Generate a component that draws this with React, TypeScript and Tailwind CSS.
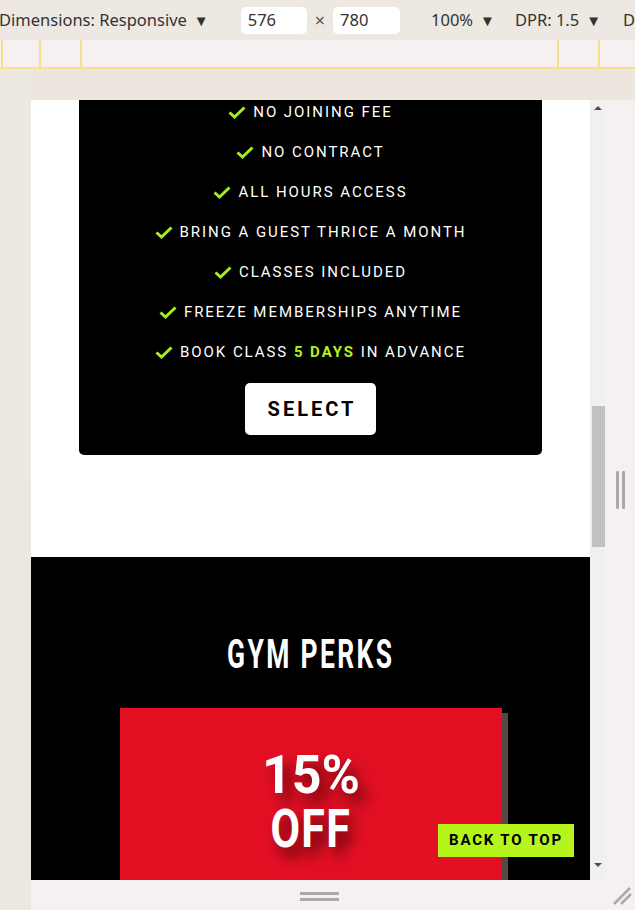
import React from "react";

const perks: React.ReactNode[] = [
  "NO JOINING FEE",
  "NO CONTRACT",
  "ALL HOURS ACCESS",
  "BRING A GUEST THRICE A MONTH",
  "CLASSES INCLUDED",
  "FREEZE MEMBERSHIPS ANYTIME",
  <>
    BOOK CLASS <span className="font-bold text-[#b3f21a]">5 DAYS</span> IN ADVANCE
  </>,
];

const Check = () => (
  <svg width="18" height="13" viewBox="0 0 18 13" fill="none" className="shrink-0">
    <path d="M1.5 6.5 L6.5 11 L16.5 1.5" stroke="#a6ee19" strokeWidth="3" />
  </svg>
);

const Caret = () => <span className="ml-[7px] text-[15px]">▼</span>;

const Toolbar = () => (
  <div className="h-[40px] bg-[#ede8e1] flex items-center whitespace-nowrap overflow-hidden text-[16.5px] text-[#333] font-['Noto_Sans',sans-serif]">
    <span className="shrink-0 -ml-[1px] flex items-center">
      Dimensions: Responsive
      <Caret />
    </span>
    <span className="shrink-0 ml-[32px] w-[66px] h-[27px] bg-white rounded-[5px] pl-[7px] flex items-center">576</span>
    <span className="shrink-0 mx-[8px] text-[18px] text-[#555]">×</span>
    <span className="shrink-0 w-[67px] h-[27px] bg-white rounded-[5px] pl-[7px] flex items-center">780</span>
    <span className="shrink-0 ml-[31px] flex items-center">
      100%
      <Caret />
    </span>
    <span className="shrink-0 ml-[20px] flex items-center">
      DPR: 1.5
      <Caret />
    </span>
    <span className="shrink-0 ml-[22px]">D</span>
  </div>
);

const Ruler = () => (
  <div className="h-[29px] bg-[#f6f1f0] border-b-2 border-[#fbe08a] flex">
    <div className="w-[2px] ml-[1px] bg-[#fbe08a]" />
    <div className="w-[2px] ml-[36px] bg-[#fbe08a]" />
    <div className="w-[2px] ml-[39px] bg-[#fbe08a]" />
    <div className="w-[2px] ml-[475px] bg-[#fbe08a]" />
    <div className="w-[2px] ml-[39px] bg-[#fbe08a]" />
  </div>
);

const Scrollbar = () => (
  <div className="w-[15px] bg-[#f0f0f0] flex flex-col items-center">
    <div className="mt-[6px] w-0 h-0 border-l-[4px] border-r-[4px] border-b-[4px] border-l-transparent border-r-transparent border-b-[#505050]" />
    <div className="mt-[296px] w-[13px] ml-[2px] h-[141px] bg-[#c1c1c1]" />
    <div className="mt-[316px] w-0 h-0 border-l-[4px] border-r-[4px] border-t-[4px] border-l-transparent border-r-transparent border-t-[#505050]" />
  </div>
);

const Page = () => (
  <div className="relative w-[559px] h-[780px] overflow-hidden bg-white font-['Roboto',sans-serif]">
    <div className="mx-auto w-[463px] bg-black rounded-b-[5px] flex flex-col items-center pt-[2px] pb-[20px]">
      <ul className="flex flex-col gap-[20px] items-center">
        {perks.map((p, i) => (
          <li key={i} className="h-[20px] flex items-center gap-[7px] text-white text-[15px] tracking-[0.13em]">
            <Check />
            <span>{p}</span>
          </li>
        ))}
      </ul>
      <button className="mt-[21px] w-[131px] h-[52px] bg-white rounded-[5px] text-black font-bold text-[20px] tracking-[0.15em] pl-[3px]">
        SELECT
      </button>
    </div>
    <div className="h-[102px]" />
    <section className="bg-black flex flex-col items-center pt-[80px] h-[400px]">
      <h2 className="h-[36px] flex items-center text-white text-[40px] font-bold tracking-[0.09em] leading-none">
        <span className="inline-block scale-x-[0.66]">GYM PERKS</span>
      </h2>
      <div className="mt-[35px] w-[382px] h-[260px] bg-[#e31024] shadow-[6px_5px_0_0_#574848] flex flex-col items-center pt-[40px]">
        <p className="text-white font-bold text-[53px] leading-[54px] text-center [text-shadow:8px_10px_14px_rgba(50,0,0,0.75)]">
          <span className="inline-block scale-x-[0.98]">15%</span>
          <br />
          <span className="inline-block scale-x-[0.81] tracking-[0.03em]">OFF</span>
        </p>
      </div>
    </section>
    <button className="absolute right-[16px] bottom-[23px] w-[136px] h-[33px] bg-[#b5f51b] text-black font-bold text-[15px] tracking-[0.12em]">
      BACK TO TOP
    </button>
  </div>
);

export default function App() {
  return (
    <div className="w-[635px] h-[910px] overflow-hidden bg-[#ede8e2] flex flex-col">
      <Toolbar />
      <Ruler />
      <div className="flex flex-1">
        <div className="w-[31px] bg-gradient-to-b from-[#ede8e2] to-[#ece7e0]" />
        <div className="flex flex-col flex-1">
          <div className="h-[31px] bg-[#ece6df]" />
          <div className="flex">
            <div className="flex">
              <Page />
              <Scrollbar />
            </div>
            <div className="flex-1 bg-[#f6f1f0] flex items-center justify-center gap-[3px] pl-[1px]">
              <div className="w-[3px] h-[38px] bg-[#a9a9a9] rounded-[1px]" />
              <div className="w-[3px] h-[38px] bg-[#a9a9a9] rounded-[1px]" />
            </div>
          </div>
          <div className="flex-1 bg-[#f6f1f0] relative flex flex-col items-center pt-[12px] gap-[3px] pr-[28px]">
            <div className="w-[39px] h-[3px] bg-[#a9a9a9]" />
            <div className="w-[39px] h-[3px] bg-[#a9a9a9]" />
            <svg className="absolute right-[3px] bottom-[5px]" width="20" height="18" viewBox="0 0 20 18">
              <path d="M2 17 L18 1 M9 17 L19 7" stroke="#a9a9a9" strokeWidth="2.5" />
            </svg>
          </div>
        </div>
      </div>
    </div>
  );
}
